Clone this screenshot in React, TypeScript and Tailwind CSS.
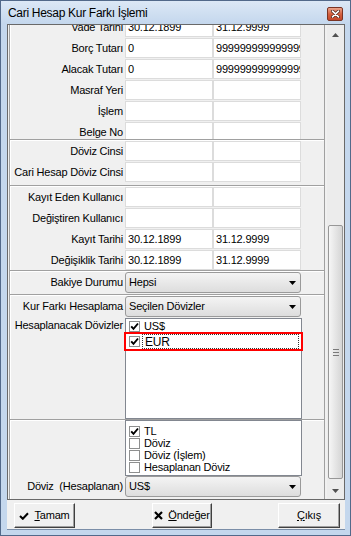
import React from 'react'

interface FieldRowProps {
  label: string
  a?: string
  b?: string
}

function FieldRow({ label, a = '', b = '' }: FieldRowProps) {
  return (
    <div className="flex h-[20px] items-center">
      <div className="w-[113px] text-right whitespace-nowrap">{label}</div>
      <div className="ml-[2px] w-[88px] h-[20px] bg-white border border-[#dcdcdc] pl-[2px] leading-[18px] overflow-hidden whitespace-nowrap">{a}</div>
      <div className="w-[88px] h-[20px] bg-white border border-[#dcdcdc] pl-[2px] leading-[18px] overflow-hidden whitespace-nowrap">{b}</div>
    </div>
  )
}

function Combo({ value }: { value: string }) {
  return (
    <div className="w-[176px] h-[21px] rounded-[3px] border border-[#9a9a9a] bg-gradient-to-b from-[#f4f4f4] to-[#dddddd] flex items-center pl-[3px] pr-[4px]">
      <span className="flex-1">{value}</span>
      <svg width="7" height="4" viewBox="0 0 7 4" className="block">
        <path d="M0 0h7L3.5 4z" fill="#000" />
      </svg>
    </div>
  )
}

function CheckBox({ checked }: { checked: boolean }) {
  return (
    <span className="w-[11px] h-[11px] border border-[#8e8f8f] bg-white flex items-center justify-center shrink-0">
      {checked && (
        <svg width="9" height="9" viewBox="0 0 9 9" className="block">
          <path d="M1.2 4.3 L3.5 6.8 L8 1.5" fill="none" stroke="#000" strokeWidth="1.9" />
        </svg>
      )}
    </span>
  )
}

export default function App() {
  return (
    <div className="w-[351px] h-[536px] bg-[#c4d7ed] border border-[#52698a] flex flex-col text-[11px] tracking-[-0.2px] text-black font-['Liberation_Sans',Arial,sans-serif]">
      {/* title bar */}
      <div className="h-[23px] shrink-0 flex pl-[7px] pr-[7px] bg-gradient-to-b from-[#dce8f6] to-[#c4d7ed]">
        <span className="self-center text-[12px] tracking-[-0.3px] pt-[1px]">Cari Hesap Kur Farkı İşlemi</span>
        <div className="ml-auto mt-[6px] w-[16px] h-[14px] rounded-[2px] border border-[#7a3424] bg-gradient-to-b from-[#eaa48c] via-[#d4603f] to-[#c4472a] flex items-center justify-center">
          <svg width="9" height="8" viewBox="0 0 9 8" className="block">
            <path d="M1.5 1.2 L7.5 6.8 M7.5 1.2 L1.5 6.8" stroke="#4a2015" strokeWidth="3.2" strokeLinecap="round" />
            <path d="M1.5 1.2 L7.5 6.8 M7.5 1.2 L1.5 6.8" stroke="#ffffff" strokeWidth="1.7" strokeLinecap="round" />
          </svg>
        </div>
      </div>

      {/* client */}
      <div className="ml-[6px] mr-[5px] mb-[5px] flex-1 flex flex-col bg-[#f0f0f0] border-b border-[#7b8ea8]">
        {/* scroll box */}
        <div className="h-[476px] shrink-0 border border-[#696969] flex overflow-hidden">
          <div className="w-[319px] overflow-hidden">
            <div className="mt-[-10px] flex flex-col">
              <div className="ml-[1px] w-[316px] h-[124px] overflow-hidden border-t border-l border-r border-[#a0a0a0] shadow-[inset_1px_1px_0_#ffffff] pt-[1px] flex flex-col gap-[1px]">
                <FieldRow label="Vade Tarihi" a="30.12.1899" b="31.12.9999" />
                <FieldRow label="Borç Tutarı" a="0" b="999999999999999" />
                <FieldRow label="Alacak Tutarı" a="0" b="999999999999999" />
                <FieldRow label="Masraf Yeri" />
                <FieldRow label="İşlem" />
                <FieldRow label="Belge No" />
              </div>
              <div className="ml-[1px] w-[316px] h-[46px] overflow-hidden border-t border-l border-r border-[#a0a0a0] shadow-[inset_1px_1px_0_#ffffff] pt-[1px] flex flex-col gap-[1px]">
                <FieldRow label="Döviz Cinsi" />
                <FieldRow label="Cari Hesap Döviz Cinsi" />
              </div>
              <div className="ml-[1px] w-[316px] h-[85px] overflow-hidden border-t border-l border-r border-[#a0a0a0] shadow-[inset_1px_1px_0_#ffffff] pt-[1px] flex flex-col gap-[1px]">
                <FieldRow label="Kayıt Eden Kullanıcı" />
                <FieldRow label="Değiştiren Kullanıcı" />
                <FieldRow label="Kayıt Tarihi" a="30.12.1899" b="31.12.9999" />
                <FieldRow label="Değişiklik Tarihi" a="30.12.1899" b="31.12.9999" />
              </div>
              <div className="ml-[1px] w-[316px] h-[24px] overflow-hidden border-t border-l border-r border-[#a0a0a0] shadow-[inset_1px_1px_0_#ffffff] pt-[1px]">
                <div className="flex items-center">
                  <div className="w-[113px] text-right whitespace-nowrap">Bakiye Durumu</div>
                  <div className="ml-[2px]"><Combo value="Hepsi" /></div>
                </div>
              </div>
              <div className="ml-[1px] w-[316px] h-[125px] overflow-hidden border-t border-l border-r border-[#a0a0a0] shadow-[inset_1px_1px_0_#ffffff] pt-[1px] flex flex-col gap-[1px]">
                <div className="flex items-center">
                  <div className="w-[113px] text-right whitespace-nowrap">Kur Farkı Hesaplama</div>
                  <div className="ml-[2px]"><Combo value="Seçilen Dövizler" /></div>
                </div>
                <div className="flex items-start">
                  <div className="w-[113px] text-right whitespace-nowrap pt-[1px] leading-[13px]">Hesaplanacak Dövizler</div>
                  <div className="ml-[2px] w-[177px] h-[101px] bg-white border border-[#828790] pt-[1px]">
                    <div className="h-[13px] flex items-center pl-[3px] gap-[4px]">
                      <CheckBox checked />
                      <span>US$</span>
                    </div>
                    <div className="relative h-[17px] flex items-center pl-[3px]">
                      <CheckBox checked />
                      <div className="ml-[2px] mr-[2px] flex-1 h-[15px] border border-dotted border-[#333] pl-[2px] flex items-center text-[12px]">EUR</div>
                      <span className="absolute -left-[2px] -right-[2px] -top-[1px] -bottom-[1px] border-2 border-[#ff0000]" />
                    </div>
                  </div>
                </div>
              </div>
              <div className="ml-[1px] w-[316px] h-[110px] overflow-hidden border-t border-l border-r border-[#a0a0a0] shadow-[inset_1px_1px_0_#ffffff] flex flex-col">
                <div className="flex">
                  <div className="w-[113px]" />
                  <div className="ml-[2px] w-[177px] h-[56px] bg-white border border-[#828790] pt-[4px] pl-[3px]">
                    {[
                      { t: 'TL', c: true },
                      { t: 'Döviz', c: false },
                      { t: 'Döviz (İşlem)', c: false },
                      { t: 'Hesaplanan Döviz', c: false },
                    ].map((it) => (
                      <div key={it.t} className="h-[12px] flex items-center gap-[4px]">
                        <CheckBox checked={it.c} />
                        <span>{it.t}</span>
                      </div>
                    ))}
                  </div>
                </div>
                <div className="flex items-center">
                  <div className="w-[113px] text-right whitespace-pre">Döviz  (Hesaplanan)</div>
                  <div className="ml-[2px]"><Combo value="US$" /></div>
                </div>
              </div>
            </div>
          </div>

          {/* scrollbar */}
          <div className="w-[17px] ml-[1px] bg-[#ececec] flex flex-col items-center">
            <div className="h-[20px] w-full flex items-center justify-center">
              <svg width="7" height="4" viewBox="0 0 7 4" className="block">
                <path d="M0 4h7L3.5 0z" fill="#505050" />
              </svg>
            </div>
            <div className="h-[180px]" />
            <div className="w-[15px] h-[254px] rounded-[2px] border border-[#979797] bg-gradient-to-r from-[#f6f6f6] to-[#d5d5d5] flex flex-col items-center justify-center gap-[2px]">
              <span className="w-[6px] h-[1px] bg-[#7a7a7a]" />
              <span className="w-[6px] h-[1px] bg-[#7a7a7a]" />
              <span className="w-[6px] h-[1px] bg-[#7a7a7a]" />
            </div>
            <div className="flex-1" />
            <div className="h-[16px] w-full flex items-center justify-center">
              <svg width="7" height="4" viewBox="0 0 7 4" className="block">
                <path d="M0 0h7L3.5 4z" fill="#505050" />
              </svg>
            </div>
          </div>
        </div>

        {/* buttons */}
        <div className="flex-1 flex items-start pt-[3px]">
          <button className="ml-[7px] w-[61px] h-[25px] flex items-center justify-center gap-[5px] bg-[#f0f0f0] border border-t-white border-l-white border-r-[#404040] border-b-[#404040] shadow-[inset_-1px_-1px_0_#a0a0a0]">
            <svg width="10" height="8" viewBox="0 0 10 8" className="block">
              <path d="M1 4 L3.8 6.8 L9 1.2" fill="none" stroke="#000" strokeWidth="2" />
            </svg>
            <span><span className="underline">T</span>amam</span>
          </button>
          <button className="ml-[77px] w-[60px] h-[25px] flex items-center justify-center gap-[5px] bg-[#f0f0f0] border border-t-white border-l-white border-r-[#404040] border-b-[#404040] shadow-[inset_-1px_-1px_0_#a0a0a0]">
            <svg width="9" height="9" viewBox="0 0 9 9" className="block">
              <path d="M1 1 L8 8 M8 1 L1 8" fill="none" stroke="#000" strokeWidth="2.2" />
            </svg>
            <span><span className="underline">Ö</span>ndeğer</span>
          </button>
          <button className="ml-[66px] w-[62px] h-[25px] flex items-center justify-center bg-[#f0f0f0] border border-t-white border-l-white border-r-[#404040] border-b-[#404040] shadow-[inset_-1px_-1px_0_#a0a0a0]">
            <span><span className="underline">Ç</span>ıkış</span>
          </button>
        </div>
      </div>
    </div>
  )
}
